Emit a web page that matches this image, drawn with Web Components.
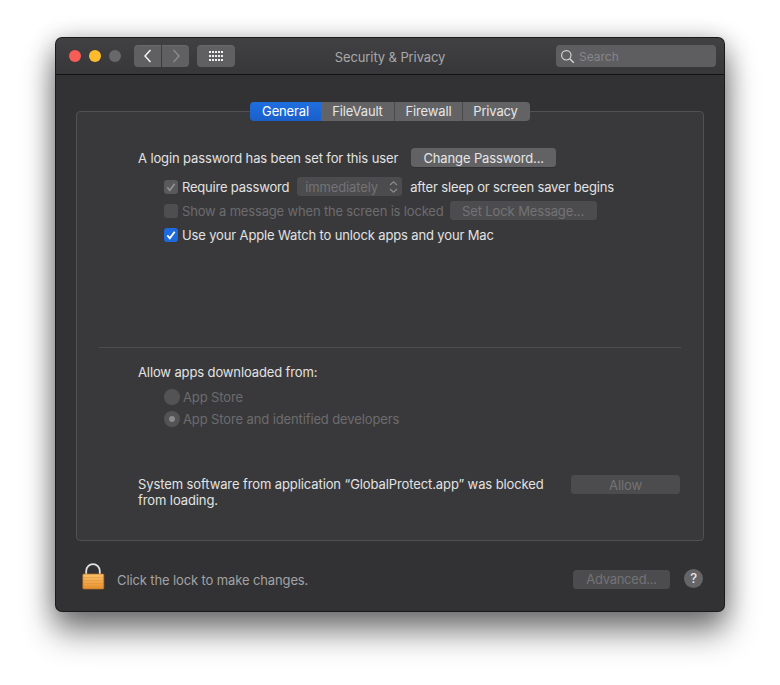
<!doctype html>
<html><head><meta charset="utf-8"><style>
html,body{margin:0;padding:0;background:#fff;width:780px;height:685px;overflow:hidden}
body{font-family:Inter,"Liberation Sans",sans-serif;font-size:13px;color:#e2e2e2;letter-spacing:-.12px}
</style></head><body>
<prefs-window>
  <title-bar slot="title"></title-bar>
  <tab-strip></tab-strip>
  <prefs-panel>
    <div style="display:flex;flex-direction:column">
      <form-row indent="62" top="36" gap="13"><span>A login password has been set for this user</span><mac-button w="145">Change Password...</mac-button></form-row>
      <form-row indent="88" top="10" gap="7"><mac-check state="dim"></mac-check><span style="margin-left:-3px;letter-spacing:-.2px">Require password</span><mac-select w="105" style="margin-left:1px">immediately</mac-select><span style="margin-left:1px;letter-spacing:-.15px">after sleep or screen saver begins</span></form-row>
      <form-row indent="88" top="5" gap="4"><mac-check state="off"></mac-check><span style="color:#6c6c6e;letter-spacing:-.17px">Show a message when the screen is locked</span><mac-button w="147" off style="margin-left:2px">Set Lock Message...</mac-button></form-row>
      <form-row indent="88" top="5" gap="4"><mac-check state="on"></mac-check><span style="letter-spacing:-.14px">Use your Apple Watch to unlock apps and your Mac</span></form-row>
    </div>
    <hr-line></hr-line>
    <form-row indent="62" top="14"><span>Allow apps downloaded from:</span></form-row>
    <form-row indent="88" top="6" gap="3"><mac-radio></mac-radio><span style="color:#6c6c6e">App Store</span></form-row>
    <form-row indent="88" top="3" gap="3"><mac-radio on></mac-radio><span style="color:#6c6c6e">App Store and identified developers</span></form-row>
    <block-row></block-row>
  </prefs-panel>
  <foot-bar></foot-bar>
</prefs-window>
<script>
function def(name, css, html, init){
  customElements.define(name, class extends HTMLElement{
    connectedCallback(){
      if(this.shadowRoot) return;
      const r=this.attachShadow({mode:'open'});
      r.innerHTML='<style>'+css+'</style>'+html;
      if(init) init(this,r);
    }
  });
}
def('prefs-window',`
:host{display:block;box-sizing:border-box;width:780px;height:685px;padding:38px 56px 0}
.w{box-sizing:border-box;width:668px;height:573px;border-radius:6px;background:#323234;
 box-shadow:0 0 0 1px #1a1a1b,0 20px 32px 2px rgba(0,0,0,.45),0 4px 26px rgba(0,0,0,.32);display:flex;flex-direction:column;overflow:hidden}
`,`<div class="w"><slot name="title"></slot><slot></slot></div>`);

def('title-bar',`
:host{display:flex;align-items:center;box-sizing:border-box;height:37px;flex:none;padding:0 8px 0 13px;
 background:linear-gradient(#414144,#37373a);border-bottom:1px solid #111;position:relative}
.d{width:12px;height:12px;border-radius:50%;margin-right:8px;flex:none}
.nav{display:flex;gap:1px;margin-left:5px}
.b{height:22px;background:#606062;display:flex;align-items:center;justify-content:center;box-shadow:inset 0 1px 0 rgba(255,255,255,.05)}
.t{position:absolute;left:0;right:0;top:11px;text-align:center;color:#a9a9aa;font-size:13px;line-height:16px;letter-spacing:-.1px;pointer-events:none}
.s{margin-left:auto;width:160px;height:22px;border-radius:4px;background:#5e5e60;display:flex;align-items:center;color:#85858a;font-size:12px;letter-spacing:0}
.s svg{margin:0 4px 0 4px}
`,`
<div class="d" style="background:#f85c56"></div><div class="d" style="background:#fdbb2e"></div><div class="d" style="background:#68686a"></div>
<div class="nav">
 <div class="b" style="width:27px;border-radius:4px 0 0 4px"><svg width="10" height="14" viewBox="0 0 10 14"><path d="M7.500 1 2 7l5.500 6" fill="none" stroke="#f2f2f2" stroke-width="1.500"/></svg></div>
 <div class="b" style="width:27px;border-radius:0 4px 4px 0"><svg width="10" height="14" viewBox="0 0 10 14"><path d="M2.500 1 8 7l-5.500 6" fill="none" stroke="#8c8c8e" stroke-width="1.300"/></svg></div>
</div>
<div class="b" style="width:38px;border-radius:4px;margin-left:8px"><svg width="14" height="10" viewBox="0 0 14 10" fill="#f2f2f2"><path d="M0 0h2v2H0zM3 0h2v2H3zM6 0h2v2H6zM9 0h2v2H9zM12 0h2v2h-2zM0 4h2v2H0zM3 4h2v2H3zM6 4h2v2H6zM9 4h2v2H9zM12 4h2v2h-2zM0 8h2v2H0zM3 8h2v2H3zM6 8h2v2H6zM9 8h2v2H9zM12 8h2v2h-2z"/></svg></div>
<div class="t">Security &amp; Privacy</div>
<div class="s"><svg width="15" height="15" viewBox="0 0 15 15" fill="none" stroke="#d2d2d2" stroke-width="1.200"><circle cx="6.300" cy="6.300" r="4.700"/><path d="m9.800 9.800 4 4" stroke-width="1.500"/></svg>Search</div>
`);

def('tab-strip',`
:host{display:flex;justify-content:center;position:relative;z-index:2;margin-top:27px;margin-bottom:-10px;height:19px;flex:none}
.i{display:flex;align-items:center;justify-content:center;height:19px;padding-bottom:1px;background:#636365;color:#e6e6e6;font-size:13px;letter-spacing:-.15px;border-right:1px solid #49494b;box-sizing:border-box}
.a{background:linear-gradient(#1f6fe0,#1a5fca);color:#fff;border:none}
`,`
<div class="i a" style="width:71px;border-radius:4px 0 0 4px">General</div>
<div class="i" style="width:74px">FileVault</div>
<div class="i" style="width:68px">Firewall</div>
<div class="i" style="width:67px;border:none;border-radius:0 4px 4px 0;padding-right:2px">Privacy</div>
`);

def('prefs-panel',`
:host{display:block;box-sizing:border-box;width:628px;height:430px;margin:0 auto;flex:none;background:#39393b;border:1px solid #515153;border-radius:4px}
`,`<slot></slot>`);

def('form-row',`
:host{display:flex;align-items:center;min-height:19px;line-height:16px}
`,`<slot></slot>`,(el)=>{
  el.style.paddingLeft=(+el.getAttribute('indent')-1)+'px';
  el.style.marginTop=el.getAttribute('top')+'px';
  el.style.gap=(el.getAttribute('gap')||0)+'px';
});

def('mac-button',`
:host{display:flex;align-items:center;justify-content:center;height:19px;border-radius:3.500px;background:#626264;color:#e6e6e6;font-size:13px;flex:none;box-shadow:0 1px 0 rgba(0,0,0,.15)}
:host([off]){background:#4c4c4e;color:#737375;box-shadow:none}
`,`<slot></slot>`,(el)=>{el.style.width=el.getAttribute('w')+'px'});

def('mac-select',`
:host{display:flex;align-items:center;height:19px;border-radius:3.500px;background:#4c4c4e;color:#737375;font-size:13px;flex:none;box-sizing:border-box;padding:0 4px 0 8px;justify-content:space-between}
`,`<slot></slot><svg width="9" height="14" viewBox="0 0 9 14" fill="none" stroke="#8c8c8e" stroke-width="1.100"><path d="M1 5 4.500 1.800 8 5M1 9l3.500 3.200L8 9"/></svg>`,(el)=>{el.style.width=el.getAttribute('w')+'px'});

def('mac-check',`
:host{display:flex;width:14px;height:14px;flex:none;border-radius:3px;background:#59595b;align-items:center;justify-content:center}
:host([state=on]){background:#1e69de}
:host([state=off]){background:#4e4e50}
svg{display:block}
`,`<svg width="12" height="12" viewBox="0 0 12 12" fill="none" stroke-width="1.800"><path d="M2.300 6.400 4.800 9.300 9.700 2.700"/></svg>`,(el,r)=>{
  const s=el.getAttribute('state'),p=r.querySelector('path');
  if(s==='off') r.querySelector('svg').style.display='none';
  p.setAttribute('stroke', s==='on'?'#fff':'#8e8e90');
});

def('mac-radio',`
:host{display:flex;width:16px;height:16px;flex:none;border-radius:50%;background:#535355;align-items:center;justify-content:center}
i{display:none;width:6px;height:6px;border-radius:50%;background:#8a8a8c}
:host([on]) i{display:block}
`,`<i></i>`);

def('hr-line',`
:host{display:block;height:1px;background:#4e4e50;margin:103px 22px 0 22px}
`,``);

def('block-row',`
:host{display:flex;justify-content:space-between;align-items:flex-start;padding:0 23px 0 61px;margin-top:48px;color:#e2e2e2;line-height:16px}
.t{width:420px;letter-spacing:-.1px}
mac-button{margin-top:-1px}
`,`<div class="t">System software from application “GlobalProtect.app” was blocked from loading.</div><mac-button w="109" off>Allow</mac-button>`);

def('foot-bar',`
:host{display:flex;align-items:center;box-sizing:border-box;flex:1;padding:0 21px 0 25px;color:#a3a3a4;position:relative}
.l{flex:none;margin-right:12px;margin-top:2px}
.h{width:19px;height:19px;border-radius:50%;background:#656567;color:#e6e6e6;display:flex;align-items:center;justify-content:center;font-size:13px;font-weight:500;margin-left:14px;margin-top:4px}
.sp{flex:1}
.adv{margin-top:6px;letter-spacing:-.25px}
`,`
<svg class="l" width="24" height="30" viewBox="0 0 24 30"><defs><linearGradient id="g" x1="0" y1="0" x2="0" y2="1"><stop offset="0" stop-color="#fbc26c"/><stop offset=".5" stop-color="#f3a84c"/><stop offset="1" stop-color="#e8922f"/></linearGradient></defs>
<path d="M5.200 12V9a6.800 6.800 0 0 1 13.600 0v3" fill="none" stroke="#e2e2e4" stroke-width="1.800"/>
<rect x="1.800" y="12" width="21" height="15" rx="1" fill="url(#g)" stroke="#b46f22" stroke-width=".7"/>
<path d="M2 15.500h20.500M2 18.500h20.500M2 21.500h20.500M2 24.500h20.500" stroke="#d08a35" stroke-width=".5" opacity=".7"/></svg>
<span style="margin-top:7px">Click the lock to make changes.</span><div class="sp"></div>
<mac-button class="adv" w="97" off>Advanced...</mac-button><div class="h">?</div>
`);
</script>
</body></html>
